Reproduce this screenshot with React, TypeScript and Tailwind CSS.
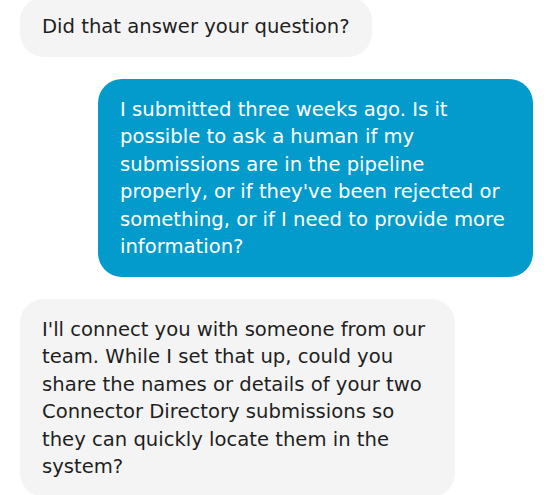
import React from 'react';

type Message = {
  id: number;
  from: 'bot' | 'user';
  text: string;
};

const messages: Message[] = [
  { id: 1, from: 'bot', text: 'Did that answer your question?' },
  {
    id: 2,
    from: 'user',
    text: "I submitted three weeks ago. Is it possible to ask a human if my submissions are in the pipeline properly, or if they've been rejected or something, or if I need to provide more information?",
  },
  {
    id: 3,
    from: 'bot',
    text: "I'll connect you with someone from our team. While I set that up, could you share the names or details of your two Connector Directory submissions so they can quickly locate them in the system?",
  },
];

export default function App() {
  return (
    <div className="h-[495px] overflow-hidden bg-white font-['DejaVu_Sans',sans-serif]">
      <div className="-mt-[3.5px] flex flex-col gap-[22px] pl-5 pr-[11px]">
        {messages.map((m) =>
          m.from === 'user' ? (
            <div key={m.id} className="flex justify-end">
              <div className="max-w-[435px] rounded-3xl bg-[#039bcc] px-[22px] py-[16.5px] text-[19.6px] leading-[27.5px] text-white">
                {m.text}
              </div>
            </div>
          ) : (
            <div key={m.id} className="flex justify-start">
              <div className="max-w-[435px] rounded-3xl bg-[#f4f4f4] px-[22px] py-[16.5px] text-[19.6px] leading-[27.5px] text-[#1f1f1f]">
                {m.text}
              </div>
            </div>
          )
        )}
      </div>
    </div>
  );
}
